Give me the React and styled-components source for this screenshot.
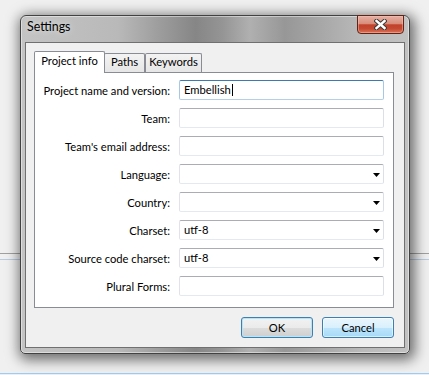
import React from "react";
import styled, { createGlobalStyle } from "styled-components";

const GlobalStyle = createGlobalStyle`
  html, body {
    margin: 0;
    padding: 0;
    background: #f0f0f0;
  }
  body {
    font-family: "Segoe UI", Lato, "Open Sans", sans-serif;
    font-size: 11.2px;
    color: #000;
  }
  * {
    box-sizing: border-box;
  }
`;

const Desktop = styled.div`
  width: 429px;
  height: 375px;
  overflow: hidden;
  padding: 15px 0 0 20px;
  background:
    linear-gradient(#a3cbee, #a3cbee) 0 373px / 100% 1px no-repeat,
    linear-gradient(#e6f1fb, #e6f1fb) 0 374px / 100% 1px no-repeat,
    linear-gradient(#a0a0a0, #a0a0a0) 0 253px / 100% 1px no-repeat,
    linear-gradient(#b8cce4, #b8cce4) 0 259px / 100% 1px no-repeat,
    #f0f0f0;
`;

const Window = styled.div`
  width: 390px;
  height: 339px;
  display: flex;
  flex-direction: column;
  padding: 0 4px 5px;
  border: 1px solid #424242;
  border-radius: 6px 6px 5px 5px;
  background: linear-gradient(
    90deg,
    #c4c4c4 0%,
    #b9b9b9 25%,
    #9c9c9c 36%,
    #868686 45%,
    #959595 52%,
    #b0b0b0 59%,
    #979797 68%,
    #a5a5a5 76%,
    #bababa 88%,
    #c2c2c2 100%
  );
  box-shadow: inset 0 0 0 1px rgba(255, 255, 255, 0.45),
    2px 3px 13px 3px rgba(0, 0, 0, 0.55);
`;

const TitleBar = styled.div`
  height: 26px;
  display: flex;
  align-items: flex-start;
`;

const Title = styled.div`
  padding: 3px 0 0 2px;
  font-size: 12.4px;
  line-height: 16px;
  color: #000;
  text-shadow: 0 0 6px rgba(255, 255, 255, 0.7);
`;

const CloseButton = styled.div`
  width: 47px;
  height: 19px;
  margin: -1px 1px 0 auto;
  display: flex;
  align-items: center;
  justify-content: center;
  border: 1px solid #5e2418;
  border-radius: 0 0 4px 4px;
  background: linear-gradient(
    #e6b0a3 0%,
    #d98d7b 45%,
    #c2412b 52%,
    #c44a33 75%,
    #dd7458 100%
  );
  box-shadow: inset 0 0 0 1px rgba(255, 200, 190, 0.45);
`;

const Client = styled.div`
  flex: 1;
  display: flex;
  flex-direction: column;
  padding: 8px 10px 9px 8px;
  border: 1px solid #707070;
  background: #f0f0f0;
`;

const TabStrip = styled.div`
  height: 22px;
  margin-bottom: -1px;
  display: flex;
  align-items: flex-end;
  position: relative;
  z-index: 1;
`;

const Tab = styled.div`
  width: ${(p) => p.$width}px;
  height: ${(p) => (p.$active ? 22 : 19)}px;
  margin-bottom: ${(p) => (p.$active ? 0 : 1)}px;
  margin-left: ${(p) => p.$shift}px;
  padding-top: ${(p) => (p.$active ? 1 : 0)}px;
  border: 1px solid #898c95;
  border-bottom: none;
  border-radius: 2px 2px 0 0;
  background: ${(p) =>
    p.$active ? "#fff" : "linear-gradient(#f3f3f3, #e6e6e6)"};
  text-align: center;
  line-height: 16px;
  white-space: nowrap;
  position: relative;
  z-index: ${(p) => (p.$active ? 2 : 1)};
`;

const Panel = styled.div`
  height: 236px;
  border: 1px solid #898c95;
  background: #fff;
`;

const Form = styled.div`
  display: grid;
  grid-template-columns: minmax(0, 1fr) 205px;
  grid-auto-rows: 20px;
  column-gap: 9px;
  row-gap: 8px;
  padding: 7px 9px 0 8px;
`;

const Label = styled.div`
  display: flex;
  justify-content: flex-end;
  min-width: 0;
  padding-top: 1px;
  line-height: 19px;
  white-space: nowrap;
`;

const Field = styled.div`
  display: flex;
  align-items: center;
  padding: 0 3px 0 4px;
  border: 1px solid;
  border-color: ${(p) =>
    p.$focused
      ? "#3d7bad #a4c9e3 #b5cfe7 #a4c9e3"
      : "#abadb3 #dbdfe6 #e3e9ef #e2e3ea"};
  border-radius: 2px;
  background: #fff;
  line-height: 18px;
  white-space: nowrap;
`;

const Caret = styled.span`
  display: inline-block;
  width: 1px;
  height: 12px;
  margin-left: 1px;
  background: #000;
`;

const Arrow = styled.svg`
  margin: 1px 0 0 auto;
  flex: none;
`;

const ButtonRow = styled.div`
  display: flex;
  justify-content: flex-end;
  gap: 9px;
  margin-top: 9px;
`;

const Button = styled.div`
  width: 72px;
  height: 21px;
  border: 1px solid #3c7fb1;
  border-radius: 3px;
  text-align: center;
  line-height: 19px;
  background: ${(p) =>
    p.$hover
      ? "linear-gradient(#eaf6fd 0%, #d9f0fc 50%, #bee6fd 50%, #a7d9f5 100%)"
      : "linear-gradient(#f2f2f2 0%, #ebebeb 50%, #dddddd 50%, #cfcfcf 100%)"};
  box-shadow: inset 0 0 0 1px
    ${(p) => (p.$hover ? "rgba(255, 255, 255, 0.55)" : "#b7e5f8")};
`;

const rows = [
  { label: "Project name and version:", value: "Embellish", focused: true },
  { label: "Team:" },
  { label: "Team's email address:" },
  { label: "Language:", combo: true },
  { label: "Country:", combo: true },
  { label: "Charset:", value: "utf-8", combo: true },
  { label: "Source code charset:", value: "utf-8", combo: true },
  { label: "Plural Forms:" },
];

const tabs = [
  { name: "Project info", width: 71, shift: 0, active: true },
  { name: "Paths", width: 41, shift: -1 },
  { name: "Keywords", width: 57, shift: 0 },
];

function CloseGlyph() {
  return (
    <svg width="13" height="11" viewBox="0 0 13 11">
      <path
        d="M2.5 2 L10.5 9 M10.5 2 L2.5 9"
        stroke="#3a3a3a"
        strokeWidth="4.4"
        strokeLinecap="square"
      />
      <path
        d="M2.5 2 L10.5 9 M10.5 2 L2.5 9"
        stroke="#fff"
        strokeWidth="2.4"
        strokeLinecap="square"
      />
    </svg>
  );
}

export default function App() {
  return (
    <>
      <GlobalStyle />
      <Desktop>
        <Window>
          <TitleBar>
            <Title>Settings</Title>
            <CloseButton>
              <CloseGlyph />
            </CloseButton>
          </TitleBar>
          <Client>
            <TabStrip>
              {tabs.map((t) => (
                <Tab
                  key={t.name}
                  $width={t.width}
                  $shift={t.shift}
                  $active={t.active}
                >
                  {t.name}
                </Tab>
              ))}
            </TabStrip>
            <Panel>
              <Form>
                {rows.map((r) => (
                  <React.Fragment key={r.label}>
                    <Label>{r.label}</Label>
                    <Field $focused={r.focused}>
                      {r.value}
                      {r.focused && <Caret />}
                      {r.combo && (
                        <Arrow width="7" height="4" viewBox="0 0 7 4">
                          <polygon points="0,0 7,0 3.5,4" fill="#000" />
                        </Arrow>
                      )}
                    </Field>
                  </React.Fragment>
                ))}
              </Form>
            </Panel>
            <ButtonRow>
              <Button>OK</Button>
              <Button $hover>Cancel</Button>
            </ButtonRow>
          </Client>
        </Window>
      </Desktop>
    </>
  );
}
